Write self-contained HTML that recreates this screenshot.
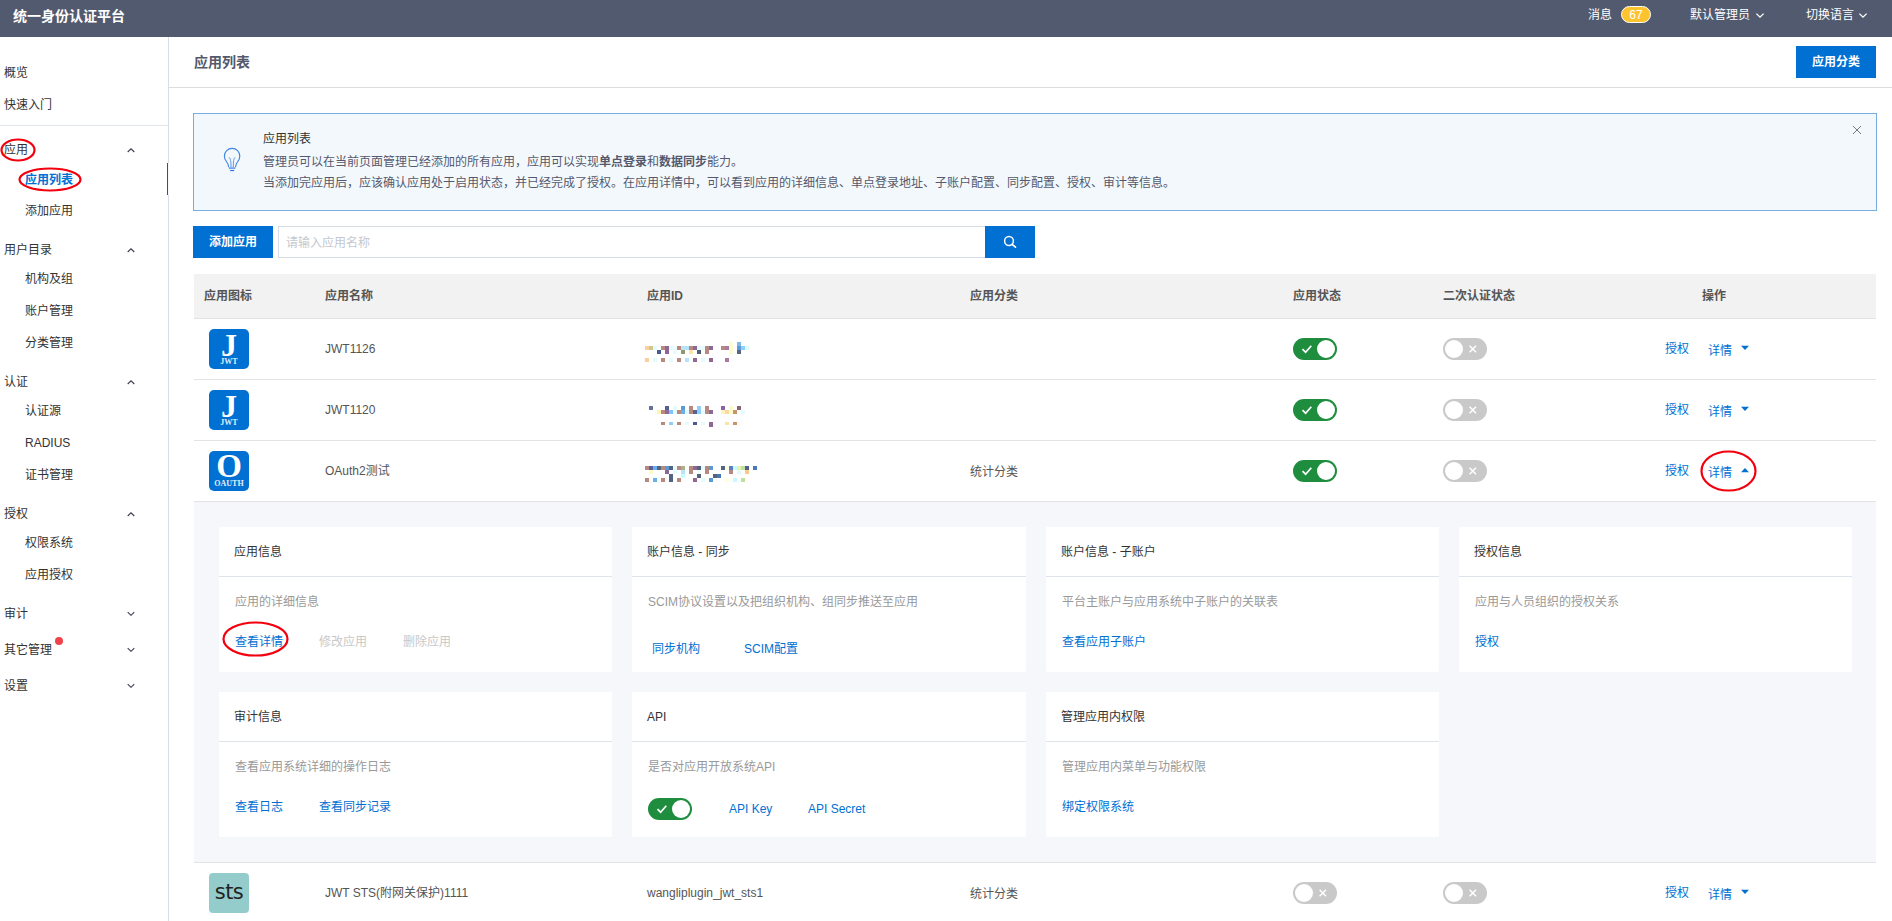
<!DOCTYPE html>
<html lang="zh-CN">
<head>
<meta charset="utf-8">
<title>统一身份认证平台</title>
<style>
*{box-sizing:border-box;margin:0;padding:0}
html,body{width:1892px;height:921px;overflow:hidden;background:#fff}
body{font-family:"Liberation Sans","Noto Sans CJK SC",sans-serif;font-size:12px;color:#333;position:relative;line-height:1}
.abs{position:absolute}
.t{position:absolute;white-space:nowrap;line-height:16px;height:16px;margin-top:1px}
/* header */
#hdr{position:absolute;left:0;top:0;width:1892px;height:37px;background:#525a70}
#hdr .t{color:#fff}
#brand{left:13px;top:6px;font-size:14px;font-weight:bold;line-height:18px;height:18px}
#badge{position:absolute;left:1621px;top:6px;width:30px;height:17px;border-radius:9px;background:#fdc42e;border:1px solid #fff;color:#fff;font-size:12px;text-align:center;line-height:17px}
/* sidebar */
#side{position:absolute;left:0;top:37px;width:169px;height:884px;border-right:1px solid #d8dde6;background:#fff}
#side .t{color:#333}
#side .sub{left:25px}
#side .top{left:4px}
.chev{position:absolute;left:126px;width:10px;height:6px}
/* main */
#title{left:194px;top:52px;font-size:14px;font-weight:bold;color:#54596d;line-height:18px;height:18px}
.btn{position:absolute;background:#0070d2;color:#fff;font-weight:bold;text-align:center;font-size:12px}
.a{color:#0070d2}
.g{color:#999}
.card .lk.dis{color:#c8c8c8}
.th{font-weight:bold;color:#555}
.hl{position:absolute;height:1px;background:#e3e3e3}
.card{position:absolute;background:#fff;border-radius:0 0 2px 2px;height:145px}
.card .hd{position:absolute;left:15px;top:17px;font-size:12px;color:#333;line-height:16px;white-space:nowrap}
.card .ln{position:absolute;left:0;right:0;top:49px;height:1px;background:#dfe4ec}
.card .ds{position:absolute;left:16px;top:67px;color:#999;line-height:16px;white-space:nowrap}
.card .lk{position:absolute;top:107px;color:#0070d2;line-height:16px;white-space:nowrap}
.sw{position:absolute;width:44px;height:22px;border-radius:11px}
.sw.on{background:#1e8e3e}
.sw.off{background:#c9c9c9}
.sw i{position:absolute;top:2px;width:18px;height:18px;border-radius:9px;background:#fff}
.sw.on i{left:24px}
.sw.off i{left:2px}
.sw svg{position:absolute;top:0;left:0}
.ico{position:absolute;width:40px;height:40px;border-radius:5px;background:#0070d2;color:#fff;font-family:"Liberation Serif",serif;text-align:center;font-weight:bold}
</style>
</head>
<body>
<!-- HEADER -->
<div id="hdr">
  <div class="t" id="brand">统一身份认证平台</div>
  <div class="t" style="left:1588px;top:6px">消息</div>
  <div id="badge">67</div>
  <div class="t" style="left:1690px;top:6px">默认管理员</div>
  <svg class="abs" style="left:1755px;top:12px" width="10" height="7" viewBox="0 0 10 7"><path d="M1.4 1.6 L5 5.1 L8.6 1.6" fill="none" stroke="#fff" stroke-width="1.3"/></svg>
  <div class="t" style="left:1806px;top:6px">切换语言</div>
  <svg class="abs" style="left:1858px;top:12px" width="10" height="7" viewBox="0 0 10 7"><path d="M1.4 1.6 L5 5.1 L8.6 1.6" fill="none" stroke="#fff" stroke-width="1.3"/></svg>
</div>

<!-- SIDEBAR -->
<div id="side">
  <div class="t top" style="top:27px">概览</div>
  <div class="t top" style="top:59px">快速入门</div>
  <div class="t top" style="top:104px">应用</div>
  <svg class="chev" style="top:110px" viewBox="0 0 10 6"><path d="M1.7 5 L5 1.8 L8.3 5" fill="none" stroke="#3a3f50" stroke-width="1.1"/></svg>
  <div class="t sub" style="top:134px;color:#0070d2;font-weight:bold">应用列表</div>
  <div class="t sub" style="top:165px">添加应用</div>
  <div class="t top" style="top:204px">用户目录</div>
  <svg class="chev" style="top:210px" viewBox="0 0 10 6"><path d="M1.7 5 L5 1.8 L8.3 5" fill="none" stroke="#3a3f50" stroke-width="1.1"/></svg>
  <div class="t sub" style="top:233px">机构及组</div>
  <div class="t sub" style="top:265px">账户管理</div>
  <div class="t sub" style="top:297px">分类管理</div>
  <div class="t top" style="top:336px">认证</div>
  <svg class="chev" style="top:342px" viewBox="0 0 10 6"><path d="M1.7 5 L5 1.8 L8.3 5" fill="none" stroke="#3a3f50" stroke-width="1.1"/></svg>
  <div class="t sub" style="top:365px">认证源</div>
  <div class="t sub" style="top:397px">RADIUS</div>
  <div class="t sub" style="top:429px">证书管理</div>
  <div class="t top" style="top:468px">授权</div>
  <svg class="chev" style="top:474px" viewBox="0 0 10 6"><path d="M1.7 5 L5 1.8 L8.3 5" fill="none" stroke="#3a3f50" stroke-width="1.1"/></svg>
  <div class="t sub" style="top:497px">权限系统</div>
  <div class="t sub" style="top:529px">应用授权</div>
  <div class="t top" style="top:568px">审计</div>
  <svg class="chev" style="top:573px" viewBox="0 0 10 6"><path d="M1.7 2.1 L5 5.3 L8.3 2.1" fill="none" stroke="#3a3f50" stroke-width="1.1"/></svg>
  <div class="t top" style="top:604px">其它管理</div>
  <svg class="chev" style="top:609px" viewBox="0 0 10 6"><path d="M1.7 2.1 L5 5.3 L8.3 2.1" fill="none" stroke="#3a3f50" stroke-width="1.1"/></svg>
  <div class="t top" style="top:640px">设置</div>
  <svg class="chev" style="top:645px" viewBox="0 0 10 6"><path d="M1.7 2.1 L5 5.3 L8.3 2.1" fill="none" stroke="#3a3f50" stroke-width="1.1"/></svg>
  <div class="hl" style="left:0;top:88px;width:168px;background:#e3e7ee"></div>
  <div class="abs" style="left:167px;top:126px;width:1px;height:32px;background:#0b5cad"></div><div class="abs" style="left:168px;top:126px;width:1px;height:32px;background:#f7f7f7"></div>
  <div class="abs" style="left:55px;top:600px;width:8px;height:8px;border-radius:4px;background:#f0424a"></div>
  <svg class="abs" style="left:0;top:98px" width="90" height="62" viewBox="0 0 90 62"><ellipse cx="18" cy="15" rx="16.5" ry="10.5" fill="none" stroke="#f3000f" stroke-width="2.2"/><ellipse cx="50" cy="44.5" rx="30.5" ry="11" fill="none" stroke="#f3000f" stroke-width="2.2"/></svg>
</div>

<!-- MAIN -->
<div class="t" id="title">应用列表</div>
<div class="btn" style="left:1796px;top:46px;width:80px;height:32px;line-height:32px">应用分类</div>
<div class="hl" style="left:169px;top:87px;width:1723px;background:#ddd"></div>

<!-- MAINGEN -->
<div class="abs" style="left:193px;top:113px;width:1684px;height:98px;background:#f3f8fc;border:1px solid #76aee1"></div>
<svg class="abs" style="left:212px;top:140px" width="40" height="40" viewBox="0 0 40 40"><path d="M16.7 27.2 C16.7 24.2 15.6 22.9 14.2 21.2 C13 19.7 12.4 18.1 12.4 16 A7.7 7.7 0 0 1 27.8 16 C27.8 18.1 27.2 19.7 26 21.2 C24.6 22.9 23.5 24.2 23.5 27.2" fill="none" stroke="#3f86e3" stroke-width="1.15"/><path d="M17.1 17.4 C18.5 18.6 19.0 21 19.0 27 M23.1 17.4 C21.7 18.6 21.3 21 21.3 27" fill="none" stroke="#4a84e0" stroke-width="0.9"/><rect x="16.9" y="27.2" width="6.4" height="1.9" fill="#6fa4e6"/><rect x="18.2" y="30" width="3.9" height="1.1" fill="#2e6fdb"/></svg>
<div class="t" style="left:263px;top:130px;color:#333">应用列表</div>
<div class="t" style="left:263px;top:153px;color:#54596d">管理员可以在当前页面管理已经添加的所有应用，应用可以实现<b>单点登录</b>和<b>数据同步</b>能力。</div>
<div class="t" style="left:263px;top:174px;color:#54596d">当添加完应用后，应该确认应用处于启用状态，并已经完成了授权。在应用详情中，可以看到应用的详细信息、单点登录地址、子账户配置、同步配置、授权、审计等信息。</div>
<svg class="abs" style="left:1852px;top:125px" width="10" height="10" viewBox="0 0 10 10"><path d="M1 1 L9 9 M9 1 L1 9" stroke="#6b6b6b" stroke-width="0.9" fill="none"/></svg>
<div class="btn" style="left:193px;top:226px;width:80px;height:32px;line-height:32px">添加应用</div>
<div class="abs" style="left:278px;top:226px;width:708px;height:32px;border:1px solid #d8dde6;background:#fff"></div>
<div class="t" style="left:286px;top:234px;color:#c4c8cf">请输入应用名称</div>
<div class="btn" style="left:985px;top:226px;width:50px;height:32px"></div>
<svg class="abs" style="left:1000px;top:232px" width="20" height="20" viewBox="0 0 20 20"><circle cx="9" cy="9" r="4.4" fill="none" stroke="#fff" stroke-width="1.5"/><path d="M12.1 12.3 L15.5 15.2" stroke="#fff" stroke-width="1.7" stroke-linecap="round"/></svg>
<div class="abs" style="left:194px;top:274px;width:1682px;height:44px;background:#f2f2f2"></div>
<div class="t th" style="left:204px;top:287px">应用图标</div>
<div class="t th" style="left:325px;top:287px">应用名称</div>
<div class="t th" style="left:647px;top:287px">应用ID</div>
<div class="t th" style="left:970px;top:287px">应用分类</div>
<div class="t th" style="left:1293px;top:287px">应用状态</div>
<div class="t th" style="left:1443px;top:287px">二次认证状态</div>
<div class="t th" style="left:1702px;top:287px">操作</div>
<div class="hl" style="left:194px;top:318px;width:1682px"></div>
<div class="ico" style="left:209px;top:329px"><span class="abs" style="left:0;width:40px;top:0px;font-size:32px;line-height:32px">J</span><span class="abs" style="left:0;width:40px;top:28px;font-size:8px;line-height:9px;opacity:.88">JWT</span></div>
<div class="t" style="left:325px;top:340px;color:#555">JWT1126</div>
<svg class="abs" style="left:645px;top:340px" width="120" height="30" shape-rendering="crispEdges"><rect x="84" y="2" width="4" height="4" fill="#fdfbd0"/><rect x="92" y="2" width="4" height="4" fill="#7cb8e8"/><rect x="0" y="6" width="4" height="4" fill="#fdd09a"/><rect x="4" y="6" width="4" height="4" fill="#d2c690"/><rect x="8" y="6" width="4" height="4" fill="#e6fbfd"/><rect x="16" y="6" width="4" height="4" fill="#b8897f"/><rect x="20" y="6" width="4" height="4" fill="#8d6795"/><rect x="24" y="6" width="4" height="4" fill="#e6fbfd"/><rect x="28" y="6" width="4" height="4" fill="#effcfe"/><rect x="32" y="6" width="4" height="4" fill="#b8897f"/><rect x="36" y="6" width="4" height="4" fill="#b5e4fb"/><rect x="40" y="6" width="4" height="4" fill="#b5e4fb"/><rect x="44" y="6" width="4" height="4" fill="#b8897f"/><rect x="48" y="6" width="4" height="4" fill="#8d6795"/><rect x="52" y="6" width="4" height="4" fill="#e6fbfd"/><rect x="56" y="6" width="4" height="4" fill="#e6fbfd"/><rect x="60" y="6" width="4" height="4" fill="#b8897f"/><rect x="64" y="6" width="4" height="4" fill="#8d6795"/><rect x="76" y="6" width="4" height="4" fill="#b8897f"/><rect x="80" y="6" width="4" height="4" fill="#a87ba0"/><rect x="84" y="6" width="4" height="4" fill="#fdfbd0"/><rect x="92" y="6" width="4" height="4" fill="#5b9bd5"/><rect x="96" y="6" width="4" height="4" fill="#8fd0fb"/><rect x="100" y="6" width="4" height="4" fill="#e0fbfd"/><rect x="12" y="10" width="4" height="4" fill="#4a5a94"/><rect x="20" y="10" width="4" height="4" fill="#8d6795"/><rect x="28" y="10" width="4" height="4" fill="#e6fbfd"/><rect x="36" y="10" width="4" height="4" fill="#8f9a6c"/><rect x="44" y="10" width="4" height="4" fill="#fde3a6"/><rect x="52" y="10" width="4" height="4" fill="#4f5f78"/><rect x="60" y="10" width="4" height="4" fill="#b8897f"/><rect x="84" y="10" width="4" height="4" fill="#fdfbd0"/><rect x="92" y="10" width="4" height="4" fill="#5a6580"/><rect x="0" y="18" width="4" height="4" fill="#fdd09a"/><rect x="8" y="18" width="4" height="4" fill="#e6fbfd"/><rect x="16" y="18" width="4" height="4" fill="#b8897f"/><rect x="24" y="18" width="4" height="4" fill="#e6fbfd"/><rect x="32" y="18" width="4" height="4" fill="#b8897f"/><rect x="40" y="18" width="4" height="4" fill="#b5e4fb"/><rect x="48" y="18" width="4" height="4" fill="#8d6795"/><rect x="56" y="18" width="4" height="4" fill="#e6fbfd"/><rect x="64" y="18" width="4" height="4" fill="#8d6795"/><rect x="80" y="18" width="4" height="4" fill="#a87ba0"/></svg>
<div class="sw on" style="left:1293px;top:338px"><svg width="44" height="22" viewBox="0 0 44 22"><path d="M9.5 11.2 L12.6 14.2 L18.3 7.8" fill="none" stroke="#fff" stroke-width="1.7"/></svg><i></i></div>
<div class="sw off" style="left:1443px;top:338px"><svg width="44" height="22" viewBox="0 0 44 22"><path d="M26.6 7.8 L33 14.2 M33 7.8 L26.6 14.2" fill="none" stroke="#fff" stroke-width="1.5"/></svg><i></i></div>
<div class="t a" style="left:1665px;top:340px">授权</div><div class="t a" style="left:1708px;top:342px">详情</div><svg class="abs" style="left:1740px;top:345px" width="10" height="6" viewBox="0 0 10 6"><path d="M1 0.8 L9 0.8 L5 5 Z" fill="#0070d2"/></svg>
<div class="hl" style="left:194px;top:379px;width:1682px"></div>
<div class="ico" style="left:209px;top:390px"><span class="abs" style="left:0;width:40px;top:0px;font-size:32px;line-height:32px">J</span><span class="abs" style="left:0;width:40px;top:28px;font-size:8px;line-height:9px;opacity:.88">JWT</span></div>
<div class="t" style="left:325px;top:401px;color:#555">JWT1120</div>
<svg class="abs" style="left:645px;top:402px" width="120" height="30" shape-rendering="crispEdges"><rect x="4" y="4" width="4" height="4" fill="#6a7097"/><rect x="20" y="4" width="4" height="4" fill="#55648e"/><rect x="28" y="4" width="4" height="4" fill="#e6fbfd"/><rect x="36" y="4" width="4" height="4" fill="#5b9bcf"/><rect x="44" y="4" width="4" height="4" fill="#b8897f"/><rect x="52" y="4" width="4" height="4" fill="#8fd0fb"/><rect x="60" y="4" width="4" height="4" fill="#b8897f"/><rect x="76" y="4" width="4" height="4" fill="#8d62a0"/><rect x="84" y="4" width="4" height="4" fill="#fdfbc8"/><rect x="92" y="4" width="4" height="4" fill="#8a6478"/><rect x="12" y="8" width="4" height="4" fill="#fdf5b0"/><rect x="16" y="8" width="4" height="4" fill="#b8897f"/><rect x="20" y="8" width="4" height="4" fill="#8d6795"/><rect x="24" y="8" width="4" height="4" fill="#7fc3f7"/><rect x="28" y="8" width="4" height="4" fill="#e6fbfd"/><rect x="32" y="8" width="4" height="4" fill="#b8897f"/><rect x="36" y="8" width="4" height="4" fill="#6cb0e8"/><rect x="40" y="8" width="4" height="4" fill="#e0fbfd"/><rect x="44" y="8" width="4" height="4" fill="#b8897f"/><rect x="48" y="8" width="4" height="4" fill="#55648e"/><rect x="52" y="8" width="4" height="4" fill="#8fd0fb"/><rect x="56" y="8" width="4" height="4" fill="#e6fbfd"/><rect x="60" y="8" width="4" height="4" fill="#b8897f"/><rect x="64" y="8" width="4" height="4" fill="#8d6795"/><rect x="76" y="8" width="4" height="4" fill="#fdf5b8"/><rect x="80" y="8" width="4" height="4" fill="#fdd9a0"/><rect x="84" y="8" width="4" height="4" fill="#fdfbc8"/><rect x="88" y="8" width="4" height="4" fill="#c8946a"/><rect x="96" y="8" width="4" height="4" fill="#e6fbfd"/><rect x="16" y="20" width="4" height="3" fill="#b8897f"/><rect x="24" y="20" width="4" height="3" fill="#8fd0fb"/><rect x="32" y="20" width="4" height="3" fill="#b8897f"/><rect x="40" y="20" width="4" height="3" fill="#e6fbfd"/><rect x="48" y="20" width="4" height="3" fill="#4a5a8c"/><rect x="56" y="20" width="4" height="3" fill="#e6fbfd"/><rect x="64" y="20" width="4" height="3" fill="#8d6795"/><rect x="80" y="20" width="4" height="3" fill="#fde3a6"/><rect x="88" y="20" width="4" height="3" fill="#c8946a"/><rect x="64" y="23" width="4" height="2" fill="#8d6795"/></svg>
<div class="sw on" style="left:1293px;top:399px"><svg width="44" height="22" viewBox="0 0 44 22"><path d="M9.5 11.2 L12.6 14.2 L18.3 7.8" fill="none" stroke="#fff" stroke-width="1.7"/></svg><i></i></div>
<div class="sw off" style="left:1443px;top:399px"><svg width="44" height="22" viewBox="0 0 44 22"><path d="M26.6 7.8 L33 14.2 M33 7.8 L26.6 14.2" fill="none" stroke="#fff" stroke-width="1.5"/></svg><i></i></div>
<div class="t a" style="left:1665px;top:401px">授权</div><div class="t a" style="left:1708px;top:403px">详情</div><svg class="abs" style="left:1740px;top:406px" width="10" height="6" viewBox="0 0 10 6"><path d="M1 0.8 L9 0.8 L5 5 Z" fill="#0070d2"/></svg>
<div class="hl" style="left:194px;top:440px;width:1682px"></div>
<div class="ico" style="left:209px;top:451px"><span class="abs" style="left:0;width:40px;top:-2px;font-size:33px;line-height:34px">O</span><span class="abs" style="left:0;width:40px;top:28px;font-size:8px;line-height:9px;opacity:.9">OAUTH</span></div>
<div class="t" style="left:325px;top:462px;color:#555">OAuth2测试</div>
<svg class="abs" style="left:645px;top:462px" width="120" height="30" shape-rendering="crispEdges"><rect x="0" y="4" width="4" height="4" fill="#b8897f"/><rect x="4" y="4" width="4" height="4" fill="#5b5fa0"/><rect x="8" y="4" width="4" height="4" fill="#6cb0e8"/><rect x="12" y="4" width="4" height="4" fill="#55647e"/><rect x="16" y="4" width="4" height="4" fill="#b8897f"/><rect x="20" y="4" width="4" height="4" fill="#5b9bd5"/><rect x="24" y="4" width="4" height="4" fill="#55647e"/><rect x="28" y="4" width="4" height="4" fill="#e6fbfd"/><rect x="32" y="4" width="4" height="4" fill="#b8897f"/><rect x="36" y="4" width="4" height="4" fill="#a8b488"/><rect x="44" y="4" width="4" height="4" fill="#b8897f"/><rect x="48" y="4" width="4" height="4" fill="#8d6795"/><rect x="52" y="4" width="4" height="4" fill="#55647e"/><rect x="56" y="4" width="4" height="4" fill="#e6fbfd"/><rect x="60" y="4" width="4" height="4" fill="#b8897f"/><rect x="64" y="4" width="4" height="4" fill="#5b9bd5"/><rect x="76" y="4" width="4" height="4" fill="#55647e"/><rect x="80" y="4" width="4" height="4" fill="#fdfde0"/><rect x="84" y="4" width="4" height="4" fill="#5b7fc0"/><rect x="88" y="4" width="4" height="4" fill="#c8fbfd"/><rect x="92" y="4" width="4" height="4" fill="#e6f3b0"/><rect x="96" y="4" width="4" height="4" fill="#c0e0a0"/><rect x="100" y="4" width="4" height="4" fill="#55608c"/><rect x="108" y="4" width="4" height="4" fill="#4a78b8"/><rect x="4" y="8" width="4" height="4" fill="#fdfbc0"/><rect x="20" y="8" width="4" height="4" fill="#8d6795"/><rect x="28" y="8" width="4" height="4" fill="#e6fbfd"/><rect x="36" y="8" width="4" height="4" fill="#b5e4fb"/><rect x="44" y="8" width="4" height="4" fill="#b8897f"/><rect x="52" y="8" width="4" height="4" fill="#effcfe"/><rect x="60" y="8" width="4" height="4" fill="#b8897f"/><rect x="84" y="8" width="4" height="4" fill="#b8897f"/><rect x="92" y="8" width="4" height="4" fill="#e0fbfd"/><rect x="100" y="8" width="4" height="4" fill="#fdc98a"/><rect x="24" y="12" width="4" height="4" fill="#55647e"/><rect x="36" y="12" width="4" height="4" fill="#c8fbfd"/><rect x="52" y="12" width="4" height="4" fill="#55647e"/><rect x="68" y="12" width="4" height="4" fill="#55647e"/><rect x="72" y="12" width="4" height="4" fill="#4a78b8"/><rect x="0" y="16" width="4" height="4" fill="#b8897f"/><rect x="8" y="16" width="4" height="4" fill="#6cb0e8"/><rect x="16" y="16" width="4" height="4" fill="#b8897f"/><rect x="24" y="16" width="4" height="4" fill="#55647e"/><rect x="32" y="16" width="4" height="4" fill="#b8897f"/><rect x="48" y="16" width="4" height="4" fill="#8d6795"/><rect x="56" y="16" width="4" height="4" fill="#e6fbfd"/><rect x="64" y="16" width="4" height="4" fill="#5b9bd5"/><rect x="80" y="16" width="4" height="4" fill="#fdfde0"/><rect x="88" y="16" width="4" height="4" fill="#c8fbfd"/><rect x="96" y="16" width="4" height="4" fill="#c0e0a0"/></svg>
<div class="t" style="left:970px;top:463px;color:#555">统计分类</div>
<div class="sw on" style="left:1293px;top:460px"><svg width="44" height="22" viewBox="0 0 44 22"><path d="M9.5 11.2 L12.6 14.2 L18.3 7.8" fill="none" stroke="#fff" stroke-width="1.7"/></svg><i></i></div>
<div class="sw off" style="left:1443px;top:460px"><svg width="44" height="22" viewBox="0 0 44 22"><path d="M26.6 7.8 L33 14.2 M33 7.8 L26.6 14.2" fill="none" stroke="#fff" stroke-width="1.5"/></svg><i></i></div>
<div class="t a" style="left:1665px;top:462px">授权</div><div class="t a" style="left:1708px;top:464px">详情</div><svg class="abs" style="left:1740px;top:467px" width="10" height="6" viewBox="0 0 10 6"><path d="M1 5.2 L5 1 L9 5.2 Z" fill="#0070d2"/></svg>
<div class="hl" style="left:194px;top:501px;width:1682px"></div>
<svg class="abs" style="left:1698px;top:448px" width="62" height="46" viewBox="0 0 62 46"><ellipse cx="30.5" cy="23" rx="27" ry="19.5" fill="none" stroke="#f3000f" stroke-width="2.2"/></svg>
<div class="abs" style="left:194px;top:502px;width:1682px;height:360px;background:#f5f7fa"></div>
<div class="hl" style="left:194px;top:862px;width:1682px"></div>
<div class="card" style="left:219px;top:527px;width:393px"><div class="hd">应用信息</div><div class="ln"></div><div class="ds">应用的详细信息</div><div class="lk " style="left:16px;top:107px">查看详情</div><div class="lk dis" style="left:100px;top:107px">修改应用</div><div class="lk dis" style="left:184px;top:107px">删除应用</div></div>
<div class="card" style="left:632px;top:527px;width:394px"><div class="hd">账户信息 - 同步</div><div class="ln"></div><div class="ds">SCIM协议设置以及把组织机构、组同步推送至应用</div><div class="lk " style="left:20px;top:114px">同步机构</div><div class="lk " style="left:112px;top:114px">SCIM配置</div></div>
<div class="card" style="left:1046px;top:527px;width:393px"><div class="hd">账户信息 - 子账户</div><div class="ln"></div><div class="ds">平台主账户与应用系统中子账户的关联表</div><div class="lk " style="left:16px;top:107px">查看应用子账户</div></div>
<div class="card" style="left:1459px;top:527px;width:393px"><div class="hd">授权信息</div><div class="ln"></div><div class="ds">应用与人员组织的授权关系</div><div class="lk " style="left:16px;top:107px">授权</div></div>
<div class="card" style="left:219px;top:692px;width:393px"><div class="hd">审计信息</div><div class="ln"></div><div class="ds">查看应用系统详细的操作日志</div><div class="lk " style="left:16px;top:107px">查看日志</div><div class="lk " style="left:100px;top:107px">查看同步记录</div></div>
<div class="card" style="left:632px;top:692px;width:394px"><div class="hd">API</div><div class="ln"></div><div class="ds">是否对应用开放系统API</div><div class="lk " style="left:97px;top:109px">API Key</div><div class="lk " style="left:176px;top:109px">API Secret</div><div class="sw on" style="left:16px;top:106px"><svg width="44" height="22" viewBox="0 0 44 22"><path d="M9.5 11.2 L12.6 14.2 L18.3 7.8" fill="none" stroke="#fff" stroke-width="1.7"/></svg><i></i></div></div>
<div class="card" style="left:1046px;top:692px;width:393px"><div class="hd">管理应用内权限</div><div class="ln"></div><div class="ds">管理应用内菜单与功能权限</div><div class="lk " style="left:16px;top:107px">绑定权限系统</div></div>
<svg class="abs" style="left:220px;top:620px" width="72" height="38" viewBox="0 0 72 38"><ellipse cx="35.5" cy="19" rx="32" ry="16.5" fill="none" stroke="#f3000f" stroke-width="2.2"/></svg>
<div class="abs" style="left:209px;top:873px;width:40px;height:40px;border-radius:4px;background:#93cccb;color:#222;font-family:'DejaVu Sans','Liberation Sans',sans-serif;font-size:21px;line-height:38px;text-align:center;letter-spacing:-.5px">sts</div>
<div class="t" style="left:325px;top:884px;color:#555">JWT STS(附网关保护)1111</div>
<div class="t" style="left:647px;top:884px;color:#555">wangliplugin_jwt_sts1</div>
<div class="t" style="left:970px;top:885px;color:#555">统计分类</div>
<div class="sw off" style="left:1293px;top:882px"><svg width="44" height="22" viewBox="0 0 44 22"><path d="M26.6 7.8 L33 14.2 M33 7.8 L26.6 14.2" fill="none" stroke="#fff" stroke-width="1.5"/></svg><i></i></div>
<div class="sw off" style="left:1443px;top:882px"><svg width="44" height="22" viewBox="0 0 44 22"><path d="M26.6 7.8 L33 14.2 M33 7.8 L26.6 14.2" fill="none" stroke="#fff" stroke-width="1.5"/></svg><i></i></div>
<div class="t a" style="left:1665px;top:884px">授权</div><div class="t a" style="left:1708px;top:886px">详情</div><svg class="abs" style="left:1740px;top:889px" width="10" height="6" viewBox="0 0 10 6"><path d="M1 0.8 L9 0.8 L5 5 Z" fill="#0070d2"/></svg>
<!-- /MAINGEN -->
</body>
</html>
